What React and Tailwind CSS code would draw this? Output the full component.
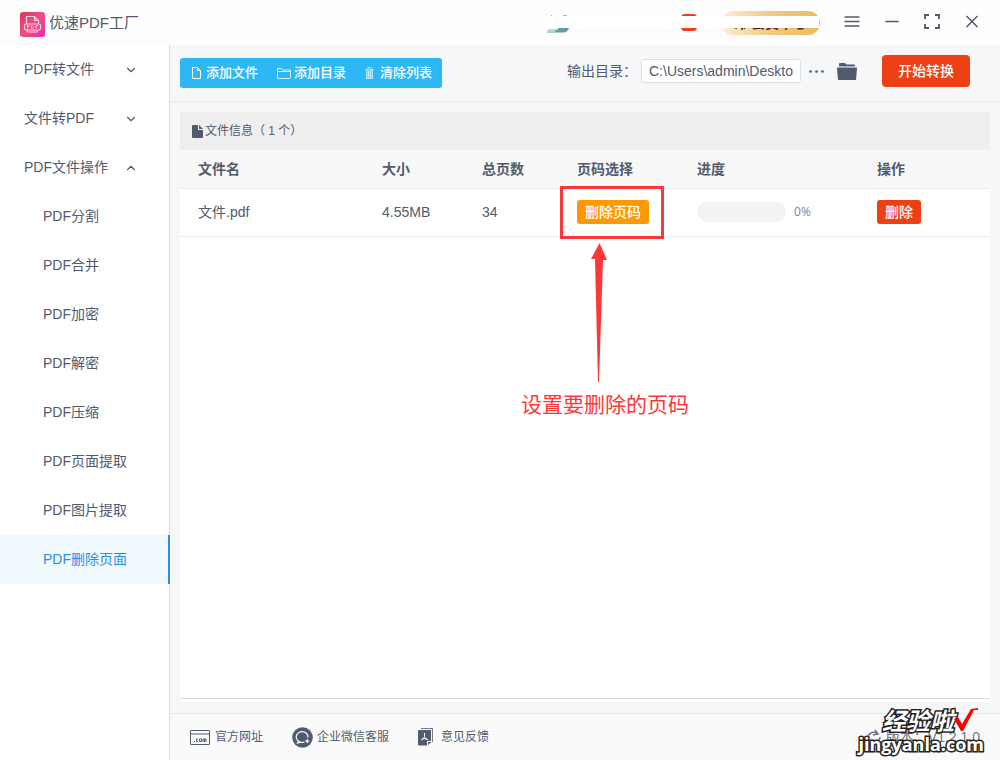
import React, { useState } from 'react';
import { ChevronDown, ChevronUp } from 'lucide-react';

const groups = [
    { name: 'PDF转文件', children: [] },
    { name: '文件转PDF', children: [] },
    {
        name: 'PDF文件操作',
        children: ['PDF分割', 'PDF合并', 'PDF加密', 'PDF解密', 'PDF压缩', 'PDF页面提取', 'PDF图片提取', 'PDF删除页面'],
    },
];

const files = [{ id: 1, name: '文件.pdf', size: '4.55MB', pages: 34, progress: 0 }];

const Logo = () => (
    <svg className="w-[25px] h-[25px]" viewBox="0 0 25 25" fill="none" aria-hidden="true">
        <defs>
            <linearGradient id="logo" x1="0" y1="0" x2="1" y2="1">
                <stop offset="0" stopColor="#e5305c" />
                <stop offset="0.5" stopColor="#ee4f80" />
                <stop offset="1" stopColor="#ea2bb0" />
            </linearGradient>
        </defs>
        <rect width="25" height="25" rx="3" fill="url(#logo)" />
        <g stroke="#fbd3de" strokeWidth="1.2">
            <path d="M6.5 12V4.5h8l4 4V12M14.5 4.5v4h4" />
            <rect x="4.5" y="12" width="16" height="6" rx="1.5" />
            <path d="M6.5 18l1.500 2h9l1.500-2" />
        </g>
        <path d="M7.500 16.500v-3h1.500v1.500h-1.500M11.500 13.500v3h1l1-1v-1l-1-1zM16 16.500v-3h2M16 15h1.500" stroke="#fbd3de" strokeWidth="0.8" />
    </svg>
);

const NewFileIcon = () => (
    <svg className="w-[9px] h-3" viewBox="0 0 9 12" fill="none" stroke="currentColor" aria-hidden="true">
        <path d="M.5.5h5l3 3v8h-8zM5.500.5v3h3" />
    </svg>
);

const NewFolderIcon = () => (
    <svg className="w-3.5 h-3" viewBox="0 0 14 12" fill="none" stroke="currentColor" aria-hidden="true">
        <path d="M.5 10.500v-9h4l1.500 1.500h7.500v7.500a1 1 0 0 1-1 1h-11a1 1 0 0 1-1-1zM.5 4.500h13" strokeOpacity="0.85" />
    </svg>
);

const TrashIcon = () => (
    <svg className="w-[9px] h-3" viewBox="0 0 9 12" fill="none" stroke="currentColor" aria-hidden="true">
        <path d="M1.500 3h6v8.500h-6z" fill="currentColor" fillOpacity="0.35" stroke="none" />
        <path d="M0 2.500h9M3 2V.5h3V2M1.500 3v8.500h6V3M3.500 4v6.500M5.500 4v6.500" strokeOpacity="0.6" />
    </svg>
);

const FileSolidIcon = () => (
    <svg className="w-[11px] h-[13px]" viewBox="0 0 11 13" fill="currentColor" aria-hidden="true">
        <path d="M1 0h5v5h5v7a1 1 0 0 1-1 1H1a1 1 0 0 1-1-1V1a1 1 0 0 1 1-1z" />
        <path d="M7 0l4 4H7z" />
    </svg>
);

const FolderSolidIcon = () => (
    <svg className="w-5 h-[17px]" viewBox="0 0 20 17" fill="currentColor" aria-hidden="true">
        <path d="M2 4V1a1 1 0 0 1 1-1h5l1.500 1.500H17a1 1 0 0 1 1 1V4z" />
        <path d="M2 3.500h16" stroke="#f6f7f9" strokeWidth="0.6" />
        <path d="M.8 4.500h18.400a.8.8 0 0 1 .8.9l-.9 10.600a1 1 0 0 1-1 1H1.900a1 1 0 0 1-1-1L0 5.400a.8.8 0 0 1 .8-.9z" />
    </svg>
);

const SiteIcon = () => (
    <svg className="w-5 h-[15px]" viewBox="0 0 20 15" fill="none" stroke="currentColor" aria-hidden="true">
        <rect x=".5" y=".5" width="19" height="14" rx=".5" />
        <path d="M0 4h20" />
        <path d="M4 11.500h1M8 9H6.500v2.500H8M9.500 9h2v2.500h-2zM13 12V9h1.500v3M14.500 9H16v3" />
    </svg>
);

const ServiceIcon = () => (
    <svg className="w-[21px] h-[21px]" viewBox="0 0 21 21" fill="none" aria-hidden="true">
        <circle cx="10.500" cy="10.500" r="10.300" fill="currentColor" />
        <path d="M16 10.500a5.900 5.400 0 1 0-3.500 4.500M6.800 14l-1.300 2 3.500-.8" stroke="#fafafa" strokeWidth="1.200" />
        <path d="M15.300 11.500l.8 1.800 1.800.8-1.800.8-.8 1.800-.8-1.800-1.800-.8 1.800-.8z" fill="#fafafa" />
    </svg>
);

const FeedbackIcon = () => (
    <svg className="w-[15px] h-[18px]" viewBox="0 0 15 18" fill="none" aria-hidden="true">
        <path d="M3 .5h11.500v13.500" stroke="currentColor" strokeWidth=".8" />
        <path d="M1 2h12v11H9v4.500H1a1 1 0 0 1-1-1V3a1 1 0 0 1 1-1z" fill="currentColor" />
        <path d="M10 14h3.500l-3.500 3z" fill="currentColor" />
        <path d="M6.500 5v3.500c-.7 1.800-1.800 3-3.500 3.600M6.500 8.500c.7 1.800 2 2.800 3.700 3.200M4.200 10.800h4.800" stroke="#fafafa" />
    </svg>
);

const TitleBar = () => (
    <header className="flex items-center justify-between h-[45px] px-5 bg-[#fdfdfd]">
        <div className="flex items-center gap-1 pt-1">
            <Logo />
            <h1 className="text-[15px] leading-5 pb-1">优速PDF工厂</h1>
        </div>
        <div className="flex items-center">
            {/* Account strip, user details blanked out */}
            <div className="relative flex items-center w-[274px] h-6 mr-6">
                <svg className="w-6 h-5" viewBox="0 0 24 20" aria-hidden="true">
                    <path d="M5 2.500h1M17 2.500h4" stroke="#a9b9be" fill="none" />
                    <path d="M12 15h11c-1 3-3 4.500-6 4.500H1v-1h8v-1H2v-1h10z" fill="#5f9ea5" />
                    <path d="M2 17h8" stroke="#dfeaec" strokeWidth=".8" />
                </svg>
                <span className="w-4 h-[17px] ml-[111px] rounded bg-[#ee4015]" />
                <button className="flex items-center gap-1 h-6 w-[99px] ml-6 pl-2.5 rounded-full bg-linear-to-r from-[#fbeeda] via-[#f0cb80] to-[#edba59] text-[#5b2416] text-sm leading-6 font-bold shrink-0 whitespace-nowrap">
                    <svg className="w-4 h-4" viewBox="0 0 16 16" fill="none" stroke="currentColor" strokeWidth="1.600" aria-hidden="true">
                        <path d="M2 2h4l-1 4v7l-2-1M10 2h3l-2 4v9M14 9v3l-1 2" />
                    </svg>
                    会员中心
                </button>
                <span className="absolute left-0 right-px top-[5px] h-3 bg-white" />
            </div>
            <div className="flex items-center gap-6 pb-0.5">
                <button aria-label="菜单" className="w-4 h-4">
                    <svg className="w-4 h-4" viewBox="0 0 16 16" fill="none" stroke="currentColor" strokeWidth="1.500" aria-hidden="true">
                        <path d="M.5 3h15M.5 7.500h15M.5 12h15" />
                    </svg>
                </button>
                <button aria-label="最小化" className="w-4 h-4">
                    <svg className="w-4 h-4" viewBox="0 0 16 16" fill="none" stroke="currentColor" strokeWidth="1.500" aria-hidden="true">
                        <path d="M1.500 7.500h13" />
                    </svg>
                </button>
                <button aria-label="最大化" className="w-4 h-4">
                    <svg className="w-4 h-4" viewBox="0 0 16 16" fill="none" stroke="currentColor" strokeWidth="1.800" aria-hidden="true">
                        <path d="M1 5V1h4M11 1h4v4M15 10v4h-4M5 14H1v-4" />
                    </svg>
                </button>
                <button aria-label="关闭" className="w-4 h-4">
                    <svg className="w-4 h-4" viewBox="0 0 16 16" fill="none" stroke="currentColor" strokeWidth="1.500" aria-hidden="true">
                        <path d="M2.500 2l11 11M13.500 2l-11 11" />
                    </svg>
                </button>
            </div>
        </div>
    </header>
);

const Sidebar = ({ active, onSelect }) => (
    <nav className="w-[170px] shrink-0 bg-white border-r border-[#dcdddf]">
        {groups.map((group) => (
            <div key={group.name}>
                <button className="flex items-center justify-between w-full h-[49px] pl-6 pr-[31px] pb-0.5">
                    {group.name}
                    {group.children.length > 0 ? <ChevronUp className="w-3.5 h-3.5 mt-0.5" /> : <ChevronDown className="w-3.5 h-3.5 mt-0.5" />}
                </button>
                {group.children.map((item) => (
                    <a
                        key={item}
                        href="#"
                        onClick={() => onSelect(item)}
                        className={
                            item === active
                                ? 'flex items-center h-[49px] pl-[43px] pb-0.5 -mr-px border-r-2 border-[#2d8cf0] bg-[#f0faff] text-[#2d8cf0]'
                                : 'flex items-center h-[49px] pl-[43px] pb-0.5'
                        }
                    >
                        {item}
                    </a>
                ))}
            </div>
        ))}
    </nav>
);

const Toolbar = () => (
    <div className="flex items-start justify-between h-[57px] pt-2.5 pl-2.5 pr-[30px] border-b border-[#e8eaec]">
        <div className="flex items-center gap-[19px] h-[30px] mt-[3px] pl-3 pr-2.5 rounded-[3px] bg-[#2db7f5] text-white text-[13px] font-medium">
            <button className="flex items-center gap-[5px]"><NewFileIcon />添加文件</button>
            <button className="flex items-center gap-[3px]"><NewFolderIcon />添加目录</button>
            <button className="flex items-center gap-1.5"><TrashIcon />清除列表</button>
        </div>
        <div className="flex items-center h-8">
            <label htmlFor="output" className="mr-1">输出目录：</label>
            <input
                id="output"
                defaultValue="C:\Users\admin\Deskto"
                className="w-40 h-6 px-[7px] bg-white border border-[#dcdee2] rounded-[3px] text-sm"
            />
            <button aria-label="更多" className="ml-2 w-4 h-4">
                <svg className="w-4 h-4" viewBox="0 0 16 16" fill="currentColor" aria-hidden="true">
                    <circle cx="1.500" cy="8.500" r="1.300" />
                    <circle cx="7.500" cy="8.500" r="1.300" />
                    <circle cx="13.500" cy="8.500" r="1.300" />
                </svg>
            </button>
            <button aria-label="打开目录" className="ml-3"><FolderSolidIcon /></button>
            <button className="ml-[25px] w-[88px] h-8 rounded bg-[#ee4015] text-white font-medium">开始转换</button>
        </div>
    </div>
);

const Callout = () => (
    <div className="absolute left-[-17px] top-[-14px] w-[104px] pointer-events-none">
        <div className="h-[53px] border-3 border-[#fb3838]" />
        <svg className="w-4 h-[139px] mt-1 ml-[31px]" viewBox="0 0 16 139" fill="#fb3838" aria-hidden="true">
            <path d="M8.500 0L16 17h-4L8 139H7L4 16H0z" />
        </svg>
        <p className="-ml-[39px] mt-2 text-[21px] leading-[30px] whitespace-nowrap text-[#fb3838]">设置要删除的页码</p>
    </div>
);

const FileTable = () => (
    <section className="flex-1 flex flex-col mx-2.5 mt-2.5 mb-[11px] pb-[3px] bg-white">
        <div className="flex items-center gap-0.5 h-[38px] pl-3 bg-[#eeeeee] text-xs">
            <FileSolidIcon />
            文件信息（ 1 个）
        </div>
        <div className="flex-1 border-b border-[#dcdee2]">
            <table className="w-full table-fixed text-left">
                <thead className="bg-[#f8f8f9]">
                    <tr className="h-[38px] border-b border-[#e8eaec]">
                        <th className="pl-[18px]">文件名</th>
                        <th className="w-[100px]">大小</th>
                        <th className="w-[95px]">总页数</th>
                        <th className="w-[120px]">页码选择</th>
                        <th className="w-[180px]">进度</th>
                        <th className="w-[113px]">操作</th>
                    </tr>
                </thead>
                <tbody>
                    {files.map((file) => (
                        <tr key={file.id} className="h-12 border-b border-[#e8eaec]">
                            <td className="pl-[18px]">{file.name}</td>
                            <td>{file.size}</td>
                            <td>{file.pages}</td>
                            <td>
                                <div className="relative h-6">
                                    <button className="w-[72px] h-6 rounded-[3px] bg-[#ff9900] text-white font-medium">删除页码</button>
                                    <Callout />
                                </div>
                            </td>
                            <td>
                                <div className="flex items-center gap-2 font-['Open_Sans'] text-xs text-[#808695]">
                                    <div className="w-[89px] h-5 rounded-full bg-[#f3f3f3] overflow-hidden">
                                        <div className="h-full bg-[#2db7f5]" style={{ width: `${file.progress}%` }} />
                                    </div>
                                    {file.progress}%
                                </div>
                            </td>
                            <td>
                                <button className="block w-11 h-6 rounded-[3px] bg-[#ee4015] text-white font-medium">删除</button>
                            </td>
                        </tr>
                    ))}
                </tbody>
            </table>
        </div>
    </section>
);

const Watermark = () => (
    <div className="absolute right-4 bottom-1.5 text-white font-bold [paint-order:stroke_fill] [-webkit-text-stroke:3px_#222]">
        <div className="flex items-start justify-end pr-1.5">
            <span className="text-2xl leading-6 italic">经验啦</span>
            <svg className="w-6 h-6 -mt-0.5" viewBox="0 0 24 24" fill="#fe0000" aria-hidden="true">
                <path d="M0 11l4-2 4 7L17 1l7-1v2h-4L9 23H7z" />
            </svg>
        </div>
        <div className="font-['Open_Sans'] text-lg leading-5">jingyanla.com</div>
    </div>
);

const Footer = () => (
    <footer className="relative flex items-center justify-between h-[47px] px-5 border-t border-[#e8eaec] bg-[#fafafa] text-xs">
        <div className="flex items-center gap-[29px]">
            <a href="#" className="flex items-center gap-[5px]"><SiteIcon />官方网址</a>
            <a href="#" className="flex items-center gap-1"><ServiceIcon />企业微信客服</a>
            <a href="#" className="flex items-center gap-2"><FeedbackIcon />意见反馈</a>
        </div>
        <span className="flex items-center gap-1 text-sm text-[#6f7588]">
            <svg className="w-4 h-4" viewBox="0 0 16 16" fill="none" stroke="currentColor" strokeWidth="1.500" aria-hidden="true">
                <path d="M2 9a6 6 0 0 1 9-5M9 1l3 4-5 1M14 8a6 6 0 0 1-9 5" />
            </svg>
            版本：V1.2.1.0
        </span>
        <Watermark />
    </footer>
);

const App = () => {
    const [active, setActive] = useState('PDF删除页面');

    return (
        <div className="min-h-screen flex flex-col bg-[#f6f7f9] text-sm text-[#515a6e] font-['Liberation_Sans','Noto_Sans_CJK_SC',sans-serif]">
            <TitleBar />
            <div className="flex-1 flex">
                <Sidebar active={active} onSelect={setActive} />
                <main className="flex-1 min-w-0 flex flex-col">
                    <Toolbar />
                    <FileTable />
                    <Footer />
                </main>
            </div>
        </div>
    );
};

export default App;
